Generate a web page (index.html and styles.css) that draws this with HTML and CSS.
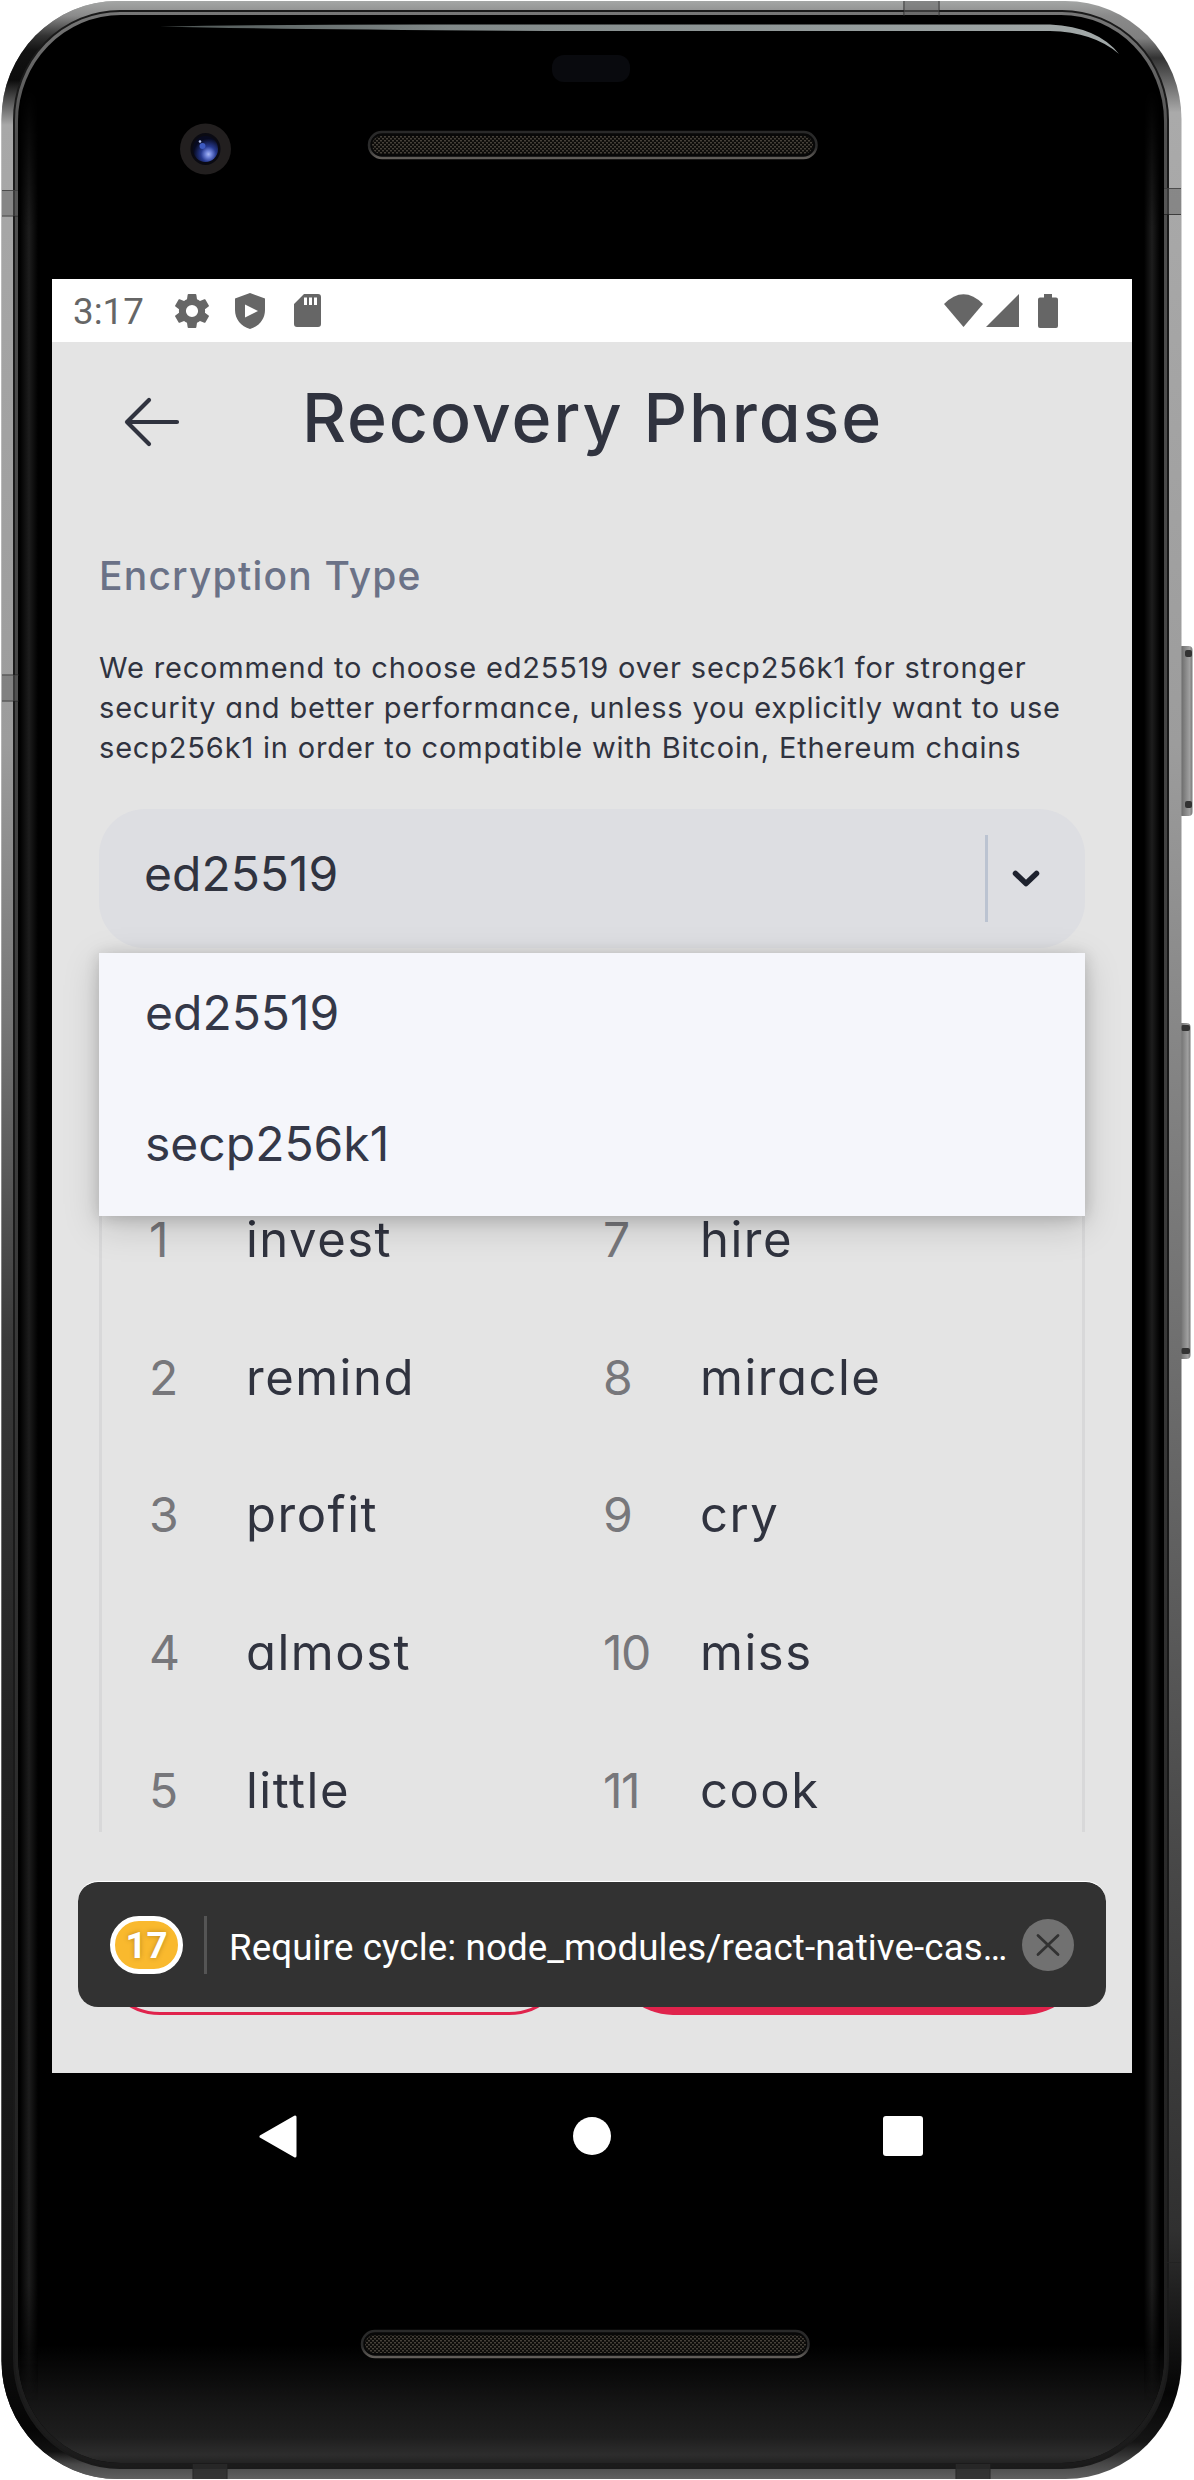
FILE: index.html
```html
<!DOCTYPE html>
<html lang="en">
<head>
<meta charset="utf-8">
<title>Recovery Phrase</title>
<link rel="stylesheet" href="styles.css">
</head>
<body>
<main class="device">
  <svg class="device-frame" width="1194" height="2480" viewBox="0 0 1194 2480" aria-hidden="true">
    <defs>
      <linearGradient id="edgeLeft" x1="0" y1="0" x2="0" y2="1">
        <stop offset="0" stop-color="#a4a6a5"/><stop offset=".006" stop-color="#8a8a8a"/><stop offset=".014" stop-color="#333"/><stop offset=".02" stop-color="#121212"/>
        <stop offset=".032" stop-color="#0c0c0c"/><stop offset=".05" stop-color="#a8a8a8"/><stop offset=".3" stop-color="#9c9c9c"/>
        <stop offset=".41" stop-color="#777"/><stop offset=".54" stop-color="#3a3a3a"/><stop offset=".7" stop-color="#222"/>
        <stop offset=".93" stop-color="#121212"/><stop offset=".98" stop-color="#050505"/><stop offset=".989" stop-color="#111"/><stop offset=".994" stop-color="#484848"/><stop offset="1" stop-color="#606060"/>
      </linearGradient>
      <linearGradient id="edgeRight" x1="0" y1="0" x2="0" y2="1">
        <stop offset="0" stop-color="#a4a6a5"/><stop offset=".006" stop-color="#8a8a8a"/><stop offset=".015" stop-color="#808080"/><stop offset=".023" stop-color="#333"/>
        <stop offset=".045" stop-color="#aaa"/><stop offset=".3" stop-color="#9c9c9c"/>
        <stop offset=".5" stop-color="#777"/><stop offset=".75" stop-color="#484848"/><stop offset=".9" stop-color="#303030"/>
        <stop offset=".965" stop-color="#050505"/><stop offset=".985" stop-color="#151515"/><stop offset=".994" stop-color="#484848"/><stop offset="1" stop-color="#606060"/>
      </linearGradient>
      <linearGradient id="innerRim" x1="0" y1="0" x2="0" y2="1">
        <stop offset="0" stop-color="#777"/><stop offset=".05" stop-color="#505050"/><stop offset=".5" stop-color="#3b3b3b"/><stop offset="1" stop-color="#1b1b1b"/>
      </linearGradient>
      <linearGradient id="sheen" x1="0" y1="0" x2="1" y2="0">
        <stop offset="0" stop-color="#000"/><stop offset=".5" stop-color="#1d1d1d"/><stop offset="1" stop-color="#000"/>
      </linearGradient>
      <linearGradient id="sheenFade" x1="0" y1="0" x2="0" y2="1">
        <stop offset="0" stop-color="#000"/><stop offset=".06" stop-color="#fff"/><stop offset=".95" stop-color="#fff"/><stop offset="1" stop-color="#000"/>
      </linearGradient>
      <mask id="sheenMask"><rect x="18" y="90" width="1146" height="2310" fill="url(#sheenFade)"/></mask>
      <linearGradient id="chin" x1="0" y1="0" x2="0" y2="1">
        <stop offset="0" stop-color="#000"/><stop offset=".5" stop-color="#151515"/><stop offset=".78" stop-color="#1e1e1e"/><stop offset=".93" stop-color="#2d2d2d"/><stop offset="1" stop-color="#232323"/>
      </linearGradient>
      <linearGradient id="glare" x1="160" y1="0" x2="1120" y2="0" gradientUnits="userSpaceOnUse">
        <stop offset="0" stop-color="#4d5554"/><stop offset=".3" stop-color="#818989"/><stop offset="1" stop-color="#a2a9a9"/>
      </linearGradient>
      <linearGradient id="key" x1="0" y1="0" x2="1" y2="0">
        <stop offset="0" stop-color="#555"/><stop offset=".35" stop-color="#777"/><stop offset=".8" stop-color="#a0a0a0"/><stop offset="1" stop-color="#777"/>
      </linearGradient>
      <linearGradient id="lip" x1="0" y1="0" x2="0" y2="1">
        <stop offset="0" stop-color="#292929"/><stop offset=".6" stop-color="#2c2c2c"/><stop offset="1" stop-color="#625e5a"/>
      </linearGradient>
      <radialGradient id="lens" cx=".62" cy=".7" r=".6">
        <stop offset="0" stop-color="#a9b8f4"/><stop offset=".2" stop-color="#7084da"/><stop offset=".5" stop-color="#26398f"/><stop offset="1" stop-color="#070a20"/>
      </radialGradient>
      <pattern id="mesh" width="4" height="4" patternUnits="userSpaceOnUse">
        <rect width="4" height="4" fill="#0d0c0a"/><rect width="2" height="1.5" fill="#46413a"/><rect x="2" y="2" width="2" height="1.5" fill="#46413a"/>
      </pattern>
      <clipPath id="leftHalf"><rect width="592" height="2480"/></clipPath>
      <clipPath id="glass"><rect x="18" y="15" width="1146" height="2448" rx="103" ry="106"/></clipPath>
    </defs>

    <g>
      <rect x="1178" y="646" width="14.500" height="170" rx="4" fill="url(#key)"/>
      <rect x="1185" y="650" width="7" height="7" rx="2" fill="#333"/>
      <rect x="1185" y="801" width="7" height="7" rx="2" fill="#333"/>
      <rect x="1177" y="1023" width="13.500" height="336" rx="4" fill="url(#key)"/>
      <rect x="1181" y="1025" width="9" height="6" rx="2" fill="#333"/>
      <rect x="1181" y="1348" width="9" height="6" rx="2" fill="#333"/>
    </g>

    <rect x="1.500" y="1" width="1180" height="2478" rx="116" ry="118" fill="url(#edgeRight)"/>
    <rect x="1.500" y="1" width="1180" height="2478" rx="116" ry="118" fill="url(#edgeLeft)" clip-path="url(#leftHalf)"/>
    <rect x="14" y="11" width="1154" height="2457" rx="106" ry="109" fill="url(#innerRim)" stroke="#1a1a1a" stroke-width="2"/>
    <rect x="18" y="15" width="1146" height="2448" rx="103" ry="106" fill="#000"/>
    <g clip-path="url(#glass)">
      <rect x="18" y="2345" width="1146" height="118" fill="url(#chin)"/>
      <g mask="url(#sheenMask)">
        <rect x="20" y="90" width="18" height="2310" fill="url(#sheen)"/>
        <rect x="1144" y="90" width="16" height="2310" fill="url(#sheen)"/>
      </g>
    </g>

    <g stroke="#222" stroke-opacity=".8" stroke-width="1.200" fill="none">
      <path d="M2 190.500h16M2 216h16M2 675h17M2 701h17M1164 188.500h17M1164 214.500h17M1164 2262.500h17M1164 2289h17"/>
      <path d="M904 1v15M939 1v15M193 2464v15M227 2464v15M956 2464v15M990 2464v15"/>
    </g>
    <path d="M2 190h16v26H2zM2 675h16v26H2zM1164 188h17v26h-17zM904 1h35v14h-35z" fill="#606060" fill-opacity=".45"/>
    <path d="M193 2464h34v15h-34zM956 2464h34v15h-34z" fill="#2b2b2b" fill-opacity=".8"/>

    <path d="M160 26.500Q260 24.500 420 24.500H1050Q1098 27 1119 54Q1094 32 1050 31H590Q300 30 160 26.500z" fill="url(#glare)"/>
    <rect x="552" y="55" width="78" height="27" rx="12" fill="#090a0e"/>

    <ellipse cx="205.500" cy="149" rx="25.500" ry="25.500" fill="#221f1f"/>
    <ellipse cx="205.500" cy="149" rx="15" ry="16" fill="#0a0a12"/>
    <ellipse cx="205.500" cy="149" rx="12.500" ry="13" fill="url(#lens)"/>
    <circle cx="202.500" cy="146" r="3" fill="#3d5ac0"/><circle cx="200" cy="141.500" r="1.300" fill="#b6c2ec"/>

    <g stroke="url(#lip)" stroke-width="2.500" fill="#080808">
      <rect x="369" y="132" width="447.500" height="26" rx="13"/>
      <rect x="362" y="2331" width="446.500" height="26" rx="13"/>
    </g>
    <rect x="372" y="136" width="441" height="18" rx="9" fill="url(#mesh)"/>
    <rect x="365" y="2335" width="441" height="18" rx="9" fill="url(#mesh)"/>
  </svg>

  <section class="screen">
    <div class="status-bar">
      <div class="status-left">
        <span class="clock">3:17</span>
        <svg width="34" height="34" viewBox="2.250 2 19.500 20" preserveAspectRatio="none"><path fill="#666" fill-rule="evenodd" d="M19.430 12.980c.04-.32.07-.64.07-.98s-.03-.66-.07-.98l2.110-1.650c.19-.15.24-.42.12-.64l-2-3.460c-.12-.22-.39-.3-.61-.22l-2.490 1c-.52-.4-1.080-.73-1.690-.98l-.38-2.650C14.460 2.180 14.250 2 14 2h-4c-.25 0-.46.18-.49.42l-.38 2.650c-.61.25-1.170.59-1.690.98l-2.490-1c-.23-.09-.49 0-.61.22l-2 3.460c-.13.22-.07.49.12.64l2.110 1.650c-.04.32-.07.65-.07.98s.03.66.07.98l-2.110 1.650c-.19.15-.24.42-.12.64l2 3.460c.12.22.39.3.61.22l2.490-1c.52.4 1.080.73 1.690.98l.38 2.650c.03.24.24.42.49.42h4c.25 0 .46-.18.49-.42l.38-2.650c.61-.25 1.170-.59 1.690-.98l2.490 1c.23.09.49 0 .61-.22l2-3.460c.12-.22.07-.49-.12-.64l-2.110-1.650zM12 15.500A3.500 3.500 0 1 1 12 8.500a3.500 3.500 0 0 1 0 7z"/></svg>
        <svg width="30" height="36" viewBox="0 0 30 36"><path fill="#666" fill-rule="evenodd" d="M15 0l15 5.500V17c0 9-6 16.500-15 19C6 33.500 0 26 0 17V5.500zM10 11.500v13L23 18z"/></svg>
        <svg class="sd" width="27" height="33" viewBox="0 0 27 33"><path fill="#666" fill-rule="evenodd" d="M10 0h14q3 0 3 3v27q0 3-3 3H3q-3 0-3-3V10zM10 3.500V11h3V3.500zM15 3.500V11h3V3.500zM20 3.500V11h3V3.500z"/></svg>
      </div>
      <div class="status-right">
        <svg width="39" height="34" viewBox="0 0 39 34"><path fill="#666" d="M19.500 33L0 10Q19.500-9.500 39 10z"/></svg>
        <svg width="33" height="34" viewBox="0 0 33 34"><path fill="#666" d="M0 33L33 0v33z"/></svg>
        <svg class="battery" width="20" height="34" viewBox="0 0 20 34"><path fill="#666" d="M6 0h8v3.500h4q2 0 2 2V32q0 2-2 2H2q-2 0-2-2V5.500q0-2 2-2h4z"/></svg>
      </div>
    </div>

    <div class="app">
      <header class="app-header">
        <svg class="back" width="58" height="52" viewBox="0 0 58 52"><path d="M26 4L4 26l22 22M4 26h50" fill="none" stroke="#30333f" stroke-width="4.200" stroke-linecap="round" stroke-linejoin="round"/></svg>
        <h1 class="title">Recovery Phrase</h1>
      </header>

      <h2 class="label">Encryption Type</h2>
      <p class="hint">We recommend to choose ed25519 over secp256k1 for stronger<br>security and better performance, unless you explicitly want to use<br>secp256k1 in order to compatible with Bitcoin, Ethereum chains</p>

      <div class="picker">
        <div class="select">
          <span class="select-value">ed25519</span>
          <span class="select-divider"></span>
          <svg width="28" height="18" viewBox="0 0 28 18"><path d="M3.500 3.500L14 13.500l10.500-10" fill="none" stroke="#1e222e" stroke-width="5.500" stroke-linecap="round" stroke-linejoin="round"/></svg>
        </div>
        <ul class="menu">
          <li class="menu-item">ed25519</li>
          <li class="menu-item">secp256k1</li>
        </ul>
      </div>

      <div class="phrase">
        <ol class="words">
          <li class="word"><span class="num">1</span>invest</li>
          <li class="word"><span class="num">2</span>remind</li>
          <li class="word"><span class="num">3</span>profit</li>
          <li class="word"><span class="num">4</span>almost</li>
          <li class="word"><span class="num">5</span>little</li>
        </ol>
        <ol class="words">
          <li class="word"><span class="num">7</span>hire</li>
          <li class="word"><span class="num">8</span>miracle</li>
          <li class="word"><span class="num">9</span>cry</li>
          <li class="word"><span class="num">10</span>miss</li>
          <li class="word"><span class="num">11</span>cook</li>
        </ol>
      </div>

      <footer class="actions">
        <div class="button button-outline"></div>
        <div class="button button-solid"></div>
        <div class="toast">
          <span class="toast-count">17</span>
          <span class="toast-divider"></span>
          <span class="toast-text">Require cycle: node_modules/react-native-cas…</span>
          <svg class="toast-close" width="52" height="52" viewBox="0 0 52 52"><circle cx="26" cy="26" r="26" fill="#717171"/><path d="M16 16.500l20 19M36 16.500l-20 19" stroke="#323232" stroke-width="2.800" stroke-linecap="round"/></svg>
        </div>
      </footer>
    </div>

    <nav class="nav-bar">
      <svg width="38" height="43" viewBox="0 0 38 43"><path d="M2 21.500L36 2v39z" fill="#fff" stroke="#fff" stroke-width="3" stroke-linejoin="round"/></svg>
      <svg class="home" width="38" height="38" viewBox="0 0 38 38"><circle cx="19" cy="19" r="19" fill="#fff"/></svg>
      <svg width="40" height="40" viewBox="0 0 40 40"><rect width="40" height="40" rx="3" fill="#fff"/></svg>
    </nav>
  </section>
</main>
</body>
</html>
```
FILE: styles.css
```css
* { box-sizing: border-box; }
body { margin: 0; background: #fff; }
svg { display: block; flex: none; }
h1, h2, p, ul, ol { margin: 0; padding: 0; font-weight: 400; list-style: none; }

.device {
  position: relative;
  width: 1194px;
  height: 2480px;
  padding: 279px 62px 0 52px;
  overflow: hidden;
}
.device-frame { position: absolute; left: 0; top: 0; }

.screen {
  position: relative;
  display: flex;
  flex-direction: column;
  width: 1080px;
  height: 1920px;
  overflow: hidden;
  font-family: Inter, "Open Sans", sans-serif;
  font-feature-settings: "cv11";
  color: #30333f;
}

.status-bar {
  display: flex;
  justify-content: space-between;
  align-items: center;
  height: 63px;
  padding: 0 74px 0 21px;
  background: #fff;
}
.status-left, .status-right { display: flex; align-items: center; }
.status-left { gap: 26px; }
.status-right { gap: 3px; }
.sd { margin-left: 3px; }
.battery { margin-left: 16px; }
.clock {
  width: 76px;
  margin-top: 1px;
  font: 400 36.75px/63px Roboto, sans-serif;
  color: #666;
}

.app {
  display: flex;
  flex-direction: column;
  height: 1731px;
  padding: 0 47px;
  background: #e4e4e4;
}
.app-header {
  display: flex;
  align-items: center;
  height: 150px;
  padding-left: 24px;
}
.back { margin-top: 10px; }
.title {
  margin-left: 121px;
  font-size: 68px;
  font-weight: 500;
  line-height: 80px;
  letter-spacing: 1.900px;
  white-space: nowrap;
}
.label {
  margin-top: 60px;
  font-size: 39px;
  font-weight: 500;
  line-height: 47px;
  letter-spacing: 1.200px;
  color: #6b7287;
}
.hint {
  margin-top: 49px;
  font-size: 29px;
  line-height: 40px;
  letter-spacing: .830px;
  white-space: nowrap;
}

.picker { display: flex; flex-direction: column; gap: 5px; margin-top: 41px; }
.select {
  display: flex;
  align-items: center;
  height: 139px;
  padding: 0 45px 0 45px;
  border-radius: 46px;
  background: #dddee2;
}
.select-value {
  flex: 1;
  padding-bottom: 9px;
  font-size: 48px;
  line-height: 60px;
}
.select-divider { width: 3px; height: 87px; margin-right: 24px; background: #bbc3d1; }
.menu {
  position: relative;
  z-index: 1;
  height: 263px;
  background: #f5f6fb;
  box-shadow: 0 10px 34px rgba(0, 0, 0, .17), 0 2px 14px rgba(0, 0, 0, .16);
}
.menu-item {
  height: 131px;
  padding: 0 46px 11px;
  font-size: 48px;
  line-height: 120px;
  color: #343848;
}

.phrase {
  display: grid;
  grid-template-columns: 454px 1fr;
  height: 664px;
  margin-top: -48px;
  padding-left: 47px;
  border: solid #d8d8d9;
  border-width: 0 3px;
  overflow: hidden;
}
.word {
  display: flex;
  height: 137.700px;
  font-size: 49px;
  line-height: 144px;
  letter-spacing: 1.500px;
}
.num { width: 97px; font-size: 48px; color: #77777b; letter-spacing: -1.500px; }

.actions {
  position: relative;
  display: grid;
  grid-template-columns: 471px 473px;
  justify-content: space-between;
  margin-top: 61px;
}
.button { height: 122px; border-radius: 61px; }
.button-outline { border: 3px solid #e0234c; }
.button-solid { background: #e0234c; }
.toast {
  position: absolute;
  left: -21px;
  top: -12px;
  display: flex;
  align-items: center;
  width: 1028px;
  height: 126px;
  padding: 0 32px;
  border-top: 1px solid #fff;
  border-radius: 20px;
  background: #323232;
  background-clip: padding-box;
  font-family: Roboto, sans-serif;
  color: #fff;
}
.toast-count {
  width: 73px;
  height: 58px;
  border: 5px solid #fff;
  border-radius: 29px;
  background: #f9b92e;
  font-size: 36.750px;
  font-weight: 700;
  line-height: 49px;
  text-align: center;
  text-shadow: 0 0 5px rgba(90, 60, 0, .4);
}
.toast-divider { width: 3px; height: 58px; margin: 0 22px 0 21px; background: #555; }
.toast-text { flex: 1; padding-top: 6px; font-size: 36.750px; line-height: 48px; letter-spacing: .100px; white-space: nowrap; }

.nav-bar {
  display: flex;
  align-items: center;
  justify-content: space-between;
  height: 126px;
  padding: 0 209px 0 207px;
  background: #000;
}
.home { margin-left: 3px; }
```
